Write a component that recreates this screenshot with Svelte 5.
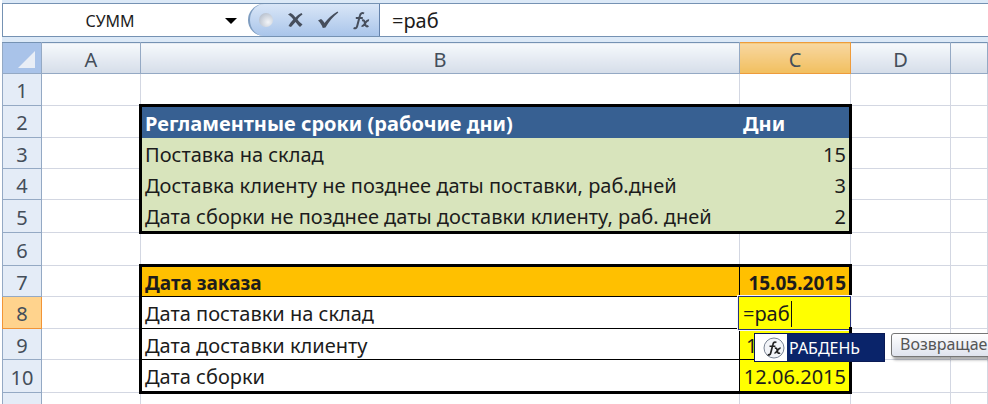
<script>
  const columns = [
    { name: 'A', cls: 'wa' },
    { name: 'B', cls: 'wb' },
    { name: 'C', cls: 'wc', active: true },
    { name: 'D', cls: 'wd' },
    { name: '', cls: 'we' }
  ];
  const rows = [
    { n: 1, h: 32 },
    { n: 2, h: 32, cls: 'title top', b: 'Регламентные сроки (рабочие дни)', c: 'Дни' },
    { n: 3, h: 31, cls: 'terms', b: 'Поставка на склад', c: '15' },
    { n: 4, h: 31, cls: 'terms', b: 'Доставка клиенту не позднее даты поставки, раб.дней', c: '3' },
    { n: 5, h: 33, cls: 'terms bottom', b: 'Дата сборки не позднее даты доставки клиенту, раб. дней', c: '2' },
    { n: 6, h: 33 },
    { n: 7, h: 31, cls: 'date order top', b: 'Дата заказа', c: '15.05.2015' },
    { n: 8, h: 32, cls: 'date', b: 'Дата поставки на склад', edit: true },
    { n: 9, h: 31, cls: 'date covered', b: 'Дата доставки клиенту', c: '1' },
    { n: 10, h: 33, cls: 'date bottom', b: 'Дата сборки', c: '12.06.2015' },
    { n: '', h: 32 }
  ];
  let formula = $state('=раб');
  let cellName = $state('СУММ');
</script>

{#snippet fx()}
  <path d="M13 3.5C11 2.3 9.4 3.4 8.8 6L6.2 16c-.6 2.2-1.8 2.8-3.6 2M4.8 8h7" />
  <path d="M11 10.5c2.2-.8 2.6.6 3 2.8s1 4 3.4 2.6M18 10.2c-2-.3-3 1.800-4 3.200s-1.800 3-3.400 2.600" />
{/snippet}

<main>
  <div class="bar">
    <input class="name" aria-label="Имя" bind:value={cellName} />
    <button class="drop" aria-label="Список имён"><svg width="12" height="6" viewBox="0 0 12 6"><path d="M0 0h12L6 6z" /></svg></button>
    <div class="tools">
      <i class="knob"></i>
      <button aria-label="Отмена">
        <svg width="20" height="20" viewBox="0 0 20 20"><path d="M3 4.500 5.500 3C8 4 9 6 10.500 7.500 12 6 14 4 16.500 3l1 1.500C15 6 13.500 8 12.500 9.500c1.500 2 3 3.500 5 5L15 17c-2-1.500-3-3.500-4.500-5C9 13.500 7.500 15.500 6 17l-2.500-1c1.200-2.500 3-4.500 4.800-6.500C7 7.500 5 5.800 3 4.500z" /></svg>
      </button>
      <button aria-label="Ввод">
        <svg width="22" height="20" viewBox="0 0 22 20"><path d="M1 10.500 4 9c1.500 1 2.500 2.200 3.500 4C11 8.500 15 4.500 20.500 1.500l.8 1C16 6.500 12 11.500 8.500 17.500L5.800 18C4.800 15 3.200 12.500 1 10.500z" /></svg>
      </button>
      <button class="fx" aria-label="Вставить функцию"><svg width="20" height="20" viewBox="0 0 20 20">{@render fx()}</svg></button>
    </div>
    <input class="formula" aria-label="Строка формул" bind:value={formula} />
  </div>

  <table>
    <colgroup>
      <col class="wn" />
      {#each columns as col}<col class={col.cls} />{/each}
    </colgroup>
    <thead>
      <tr>
        <th class="corner"><svg width="17" height="17" viewBox="0 0 17 17"><path d="M17 0v17H0z" /></svg></th>
        {#each columns as col}<th scope="col" class:active={col.active}>{col.name}</th>{/each}
      </tr>
    </thead>
    <tbody>
      {#each rows as row}
        <tr class={row.cls} style:height="{row.h}px">
          <th scope="row" class:active={row.edit}>{row.n}</th>
          <td></td>
          <td class="b">{row.b ?? ''}</td>
          <td class="c">
            {#if row.edit}
              <div class="editor">
                <input aria-label="C8" bind:value={formula} />
                <i class="caret"></i>
                <i class="handle"></i>
              </div>
              <div class="hints">
                <button class="option">
                  <svg width="22" height="22" viewBox="0 0 22 22">
                    <circle cx="11" cy="11" r="10" />
                    <g transform="translate(2.500 2.500) scale(.84)">{@render fx()}</g>
                  </svg>
                  <span>РАБДЕНЬ</span>
                </button>
                <div class="tip" role="tooltip">Возвращае</div>
              </div>
            {:else}{row.c ?? ''}{/if}
          </td>
          <td></td>
          <td></td>
        </tr>
      {/each}
    </tbody>
  </table>
</main>

<style>
  :global(body) { margin: 0; background: #fff; }
  main {
    height: 100vh;
    overflow: hidden;
    padding-left: 2px;
    box-sizing: border-box;
    font-family: "Noto Sans", "Open Sans", sans-serif;
    font-size: 20px;
    color: #1c1c1c;
  }
  button, input {
    font: inherit;
    color: inherit;
    border: 0;
    padding: 0;
    margin: 0;
    background: none;
    min-width: 0;
    outline: none;
  }
  svg { display: block; }
  .bar {
    display: flex;
    height: 32px;
    margin-top: 3px;
    border: 1px solid #7592b3;
    border-right: 0;
    background: #fff;
    box-shadow: 0 -3px #dce9f7;
  }
  .name { width: 214px; padding-top: 2px; text-align: center; font-size: 16px; }
  .drop { width: 28px; display: flex; align-items: center; justify-content: center; padding-top: 2px; }
  .tools {
    display: flex;
    align-items: center;
    gap: 12px;
    width: 132px;
    box-sizing: border-box;
    margin-left: 3px;
    padding-left: 9px;
    border-left: 2px solid #7f9dc0;
    border-right: 1px solid #6482ab;
    border-radius: 16px 0 0 16px;
    background: linear-gradient(#d9e6f7, #a9c5ea);
  }
  .tools svg { fill: #464e5c; }
  .tools .fx svg { fill: none; stroke: #464e5c; stroke-width: 2; }
  .knob {
    width: 14px;
    height: 14px;
    border-radius: 50%;
    background: radial-gradient(circle at 65% 65%, #f3f5f8, #a7b2c2);
  }
  .formula { flex: 1; padding-left: 12px; }

  table {
    width: 100%;
    margin-top: 5px;
    table-layout: fixed;
    border-collapse: collapse;
    box-shadow: 0 -5px #dce9f7;
  }
  .wn { width: 39px; }
  .wa { width: 99px; }
  .wb { width: 599px; }
  .wc { width: 111px; }
  .wd { width: 100px; }
  th, td {
    padding: 3px 3px 0;
    line-height: 24px;
    white-space: nowrap;
    border: 1px solid #d3d7e2;
  }
  th { font-weight: 400; color: #444e5a; padding: 3px 0 0; }
  thead tr { height: 31px; }
  thead th {
    background: linear-gradient(#f6f9fc, #d5dde9);
    border: 1px solid #94a9c4;
    border-top-color: #7592b3;
  }
  thead th.active { background: linear-gradient(#f8d7a1, #f1bf5e); border-color: #ee9b3b; }
  thead .corner { background: #a9c3e9; }
  .corner svg { margin: 0 6px 0 auto; fill: #e9eef6; }
  tbody th { background: #e4ecf7; border-color: #94a9c4; }
  tbody th.active { background: #ffd38d; border-color: #f29436; }

  .title td.b, .title td.c { background: #376092; color: #fff; font-weight: 700; border-color: #376092; }
  .terms td.b, .terms td.c { background: #d8e4bc; border-color: #d8e4bc; }
  .terms td.c, .date td.c { text-align: right; }
  .date td.b, .date td.c { border: 1px solid #000; }
  .date td.c { background: #ff0; }
  .covered td.c { text-align: left; padding-left: 6px; }
  .order td.b, .order td.c { background: #ffc000; font-size: 19px; font-weight: 700; }
  tr.title td.b, tr.terms td.b, tr.date td.b { border-left: 3px solid #000; }
  tr.title td.c, tr.terms td.c, tr.date td.c { border-right: 3px solid #000; }
  tr.top td.b, tr.top td.c { border-top: 3px solid #000; }
  tr.bottom td.b, tr.bottom td.c { border-bottom: 3px solid #000; }

  td.c { position: relative; }
  .editor {
    position: absolute;
    inset: -1px -2px -2px -2px;
    display: flex;
    align-items: center;
    padding: 2px 0 0 4px;
    background: #ff0;
    border: 1px solid #26327a;
    outline: 1px solid #f4f5fa;
    z-index: 1;
  }
  .editor input { width: 48px; }
  .caret { width: 1px; height: 26px; background: #111; }
  .handle { position: absolute; right: -2px; bottom: -6px; width: 3px; height: 8px; background: #000; }
  .hints {
    position: absolute;
    z-index: 2;
    top: 36px;
    left: 14px;
    display: flex;
    align-items: flex-start;
    gap: 6px;
    font-size: 16px;
  }
  .option {
    display: flex;
    align-items: center;
    gap: 4px;
    width: 131px;
    height: 29px;
    box-sizing: border-box;
    padding-left: 8px;
    border: 1px solid #0a1a55;
    background: linear-gradient(90deg, #fff 32px, #0a246a 32px);
    color: #fff;
  }
  .option svg { fill: #f2f4f8; stroke: #7a8494; flex: none; }
  .option g { fill: none; stroke: #222; stroke-width: 2; }
  .tip {
    height: 22px;
    line-height: 20px;
    padding: 0 8px;
    border: 1px solid #767676;
    border-radius: 3px;
    background: linear-gradient(#fff, #dfe3ee);
    box-shadow: 2px 3px 3px #0005;
    color: #555;
  }
</style>
